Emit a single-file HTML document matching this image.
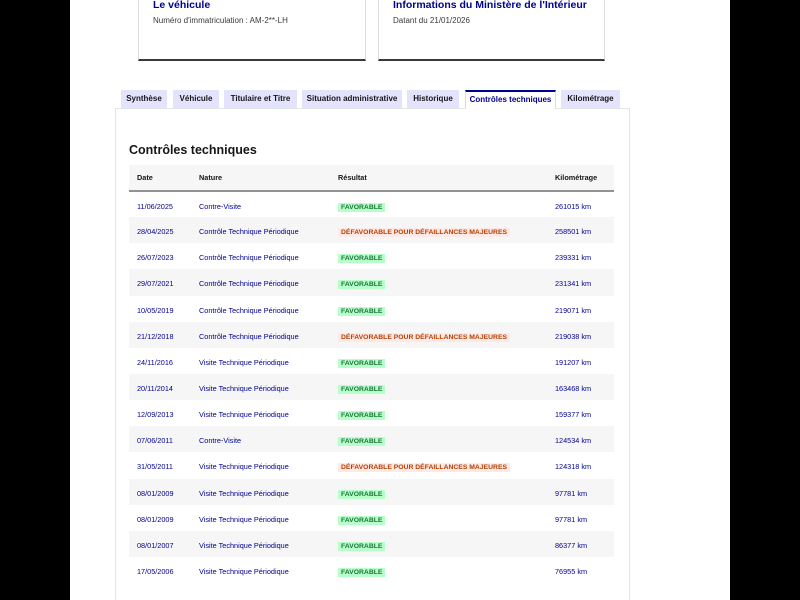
<!DOCTYPE html>
<html><head><meta charset="utf-8"><style>
*{margin:0;padding:0;box-sizing:border-box}
html,body{width:800px;height:600px;overflow:hidden}
body{background:#000;font-family:"Liberation Sans",sans-serif;position:relative}
.page{position:absolute;left:70px;top:0;width:660px;height:600px;background:#fff;overflow:hidden}
.card{position:absolute;top:-10px;height:71px;border:1px solid #ddd;border-bottom:2px solid #3a3a3a;background:#fff}
.card h3{position:absolute;left:14px;top:8px;font-size:10.5px;color:#000091;font-weight:bold}
.card p{position:absolute;left:14px;top:25px;font-size:8px;color:#3a3a3a}
.tab{position:absolute;top:90px;height:18px;background:#e3e3fd;color:#161616;font-size:8px;font-weight:bold;line-height:18px;text-align:center}
.tab.act{background:#fff;color:#000091;border-top:2px solid #000091;line-height:16px;border-left:1px solid #ddd;border-right:1px solid #ddd;height:19px}
.panel{position:absolute;left:45px;top:108px;width:515px;height:500px;border:1px solid #e5e5e5;background:#fff}
h2{position:absolute;left:59px;top:143px;font-size:12.5px;color:#161616}
table{position:absolute;left:59px;top:165px;width:485px;border-collapse:collapse;font-size:7.3px}
th{height:26px;background:#f6f6f6;text-align:left;font-weight:bold;color:#161616;border-bottom:2px solid #929292;padding-left:8px}
td{height:26.15px;color:#000091;padding-left:8px;padding-top:3px}
tr:nth-child(odd) td{background:#f6f6f6}
.f{background:#b8fec9;color:#18753c;font-weight:bold;padding:1px 3px;font-size:6.8px}
.d{background:#ffe9e6;color:#b34000;font-weight:bold;padding:1px 3px;font-size:6.8px}
</style></head><body>
<div class="page">
<div class="card" style="left:68px;width:228px"><h3>Le véhicule</h3><p>Numéro d'immatriculation : AM-2**-LH</p></div>
<div class="card" style="left:308px;width:227px"><h3>Informations du Ministère de l'Intérieur</h3><p>Datant du 21/01/2026</p></div>
<div class="panel"></div>
<div class="tab" style="left:51px;width:46px">Synthèse</div>
<div class="tab" style="left:103px;width:46px">Véhicule</div>
<div class="tab" style="left:154px;width:73px">Titulaire et Titre</div>
<div class="tab" style="left:232px;width:100px">Situation administrative</div>
<div class="tab" style="left:337px;width:52px">Historique</div>
<div class="tab act" style="left:395px;width:91px">Contrôles techniques</div>
<div class="tab" style="left:491px;width:59px">Kilométrage</div>
<h2>Contrôles techniques</h2>
<table>
<tr><th style="width:62px">Date</th><th style="width:139px">Nature</th><th style="width:217px">Résultat</th><th>Kilométrage</th></tr>
<tr><td>11/06/2025</td><td>Contre-Visite</td><td><span class="f">FAVORABLE</span></td><td>261015 km</td></tr>
<tr><td>28/04/2025</td><td>Contrôle Technique Périodique</td><td><span class="d">DÉFAVORABLE POUR DÉFAILLANCES MAJEURES</span></td><td>258501 km</td></tr>
<tr><td>26/07/2023</td><td>Contrôle Technique Périodique</td><td><span class="f">FAVORABLE</span></td><td>239331 km</td></tr>
<tr><td>29/07/2021</td><td>Contrôle Technique Périodique</td><td><span class="f">FAVORABLE</span></td><td>231341 km</td></tr>
<tr><td>10/05/2019</td><td>Contrôle Technique Périodique</td><td><span class="f">FAVORABLE</span></td><td>219071 km</td></tr>
<tr><td>21/12/2018</td><td>Contrôle Technique Périodique</td><td><span class="d">DÉFAVORABLE POUR DÉFAILLANCES MAJEURES</span></td><td>219038 km</td></tr>
<tr><td>24/11/2016</td><td>Visite Technique Périodique</td><td><span class="f">FAVORABLE</span></td><td>191207 km</td></tr>
<tr><td>20/11/2014</td><td>Visite Technique Périodique</td><td><span class="f">FAVORABLE</span></td><td>163468 km</td></tr>
<tr><td>12/09/2013</td><td>Visite Technique Périodique</td><td><span class="f">FAVORABLE</span></td><td>159377 km</td></tr>
<tr><td>07/06/2011</td><td>Contre-Visite</td><td><span class="f">FAVORABLE</span></td><td>124534 km</td></tr>
<tr><td>31/05/2011</td><td>Visite Technique Périodique</td><td><span class="d">DÉFAVORABLE POUR DÉFAILLANCES MAJEURES</span></td><td>124318 km</td></tr>
<tr><td>08/01/2009</td><td>Visite Technique Périodique</td><td><span class="f">FAVORABLE</span></td><td>97781 km</td></tr>
<tr><td>08/01/2009</td><td>Visite Technique Périodique</td><td><span class="f">FAVORABLE</span></td><td>97781 km</td></tr>
<tr><td>08/01/2007</td><td>Visite Technique Périodique</td><td><span class="f">FAVORABLE</span></td><td>86377 km</td></tr>
<tr><td>17/05/2006</td><td>Visite Technique Périodique</td><td><span class="f">FAVORABLE</span></td><td>76955 km</td></tr>
</table>
</div>
</body></html>
